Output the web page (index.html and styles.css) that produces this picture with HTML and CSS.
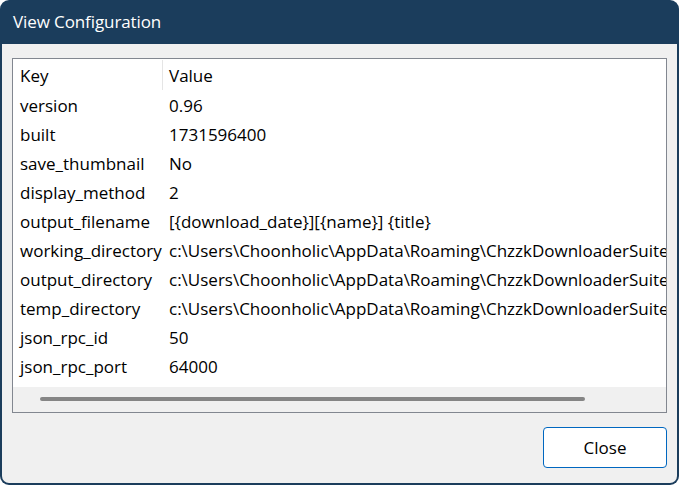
FILE: index.html
```html
<!DOCTYPE html>
<html>
<head>
<meta charset="utf-8">
<link rel="stylesheet" href="styles.css">
</head>
<body>
<div class="window">
  <div class="titlebar">View Configuration</div>
  <div class="client">
    <div class="listbox">
      <div class="list">
        <div class="row header"><div class="key">Key</div><div class="sep"></div><div class="val">Value</div></div>
        <div class="row"><div class="key">version</div><div class="val">0.96</div></div>
        <div class="row"><div class="key">built</div><div class="val">1731596400</div></div>
        <div class="row"><div class="key">save_thumbnail</div><div class="val">No</div></div>
        <div class="row"><div class="key">display_method</div><div class="val">2</div></div>
        <div class="row"><div class="key">output_filename</div><div class="val">[{download_date}][{name}] {title}</div></div>
        <div class="row"><div class="key">working_directory</div><div class="val">c:\Users\Choonholic\AppData\Roaming\ChzzkDownloaderSuite\</div></div>
        <div class="row"><div class="key">output_directory</div><div class="val">c:\Users\Choonholic\AppData\Roaming\ChzzkDownloaderSuite\</div></div>
        <div class="row"><div class="key">temp_directory</div><div class="val">c:\Users\Choonholic\AppData\Roaming\ChzzkDownloaderSuite\</div></div>
        <div class="row"><div class="key">json_rpc_id</div><div class="val">50</div></div>
        <div class="row"><div class="key">json_rpc_port</div><div class="val">64000</div></div>
      </div>
      <div class="hscroll"><div class="thumb"></div></div>
    </div>
    <div class="buttons"><button class="btn">Close</button></div>
  </div>
</div>
</body>
</html>
```

FILE: styles.css
```css
* { box-sizing: border-box; }
html, body { margin: 0; padding: 0; background: #ffffff; }
body { font-family: "Open Sans", "Noto Sans", sans-serif; }
.window {
  width: 679px;
  height: 485px;
  background: #1b3d5c;
  border-radius: 9px;
  display: flex;
  flex-direction: column;
  overflow: hidden;
}
.titlebar {
  height: 44px;
  flex: none;
  color: #ffffff;
  font-size: 17px;
  padding-left: 13px;
  padding-bottom: 1px;
  display: flex;
  align-items: center;
  letter-spacing: -0.1px;
}
.client {
  flex: 1;
  margin: 0 2px 2px 2px;
  background: #f0f0f0;
  border-radius: 0 0 7px 7px;
  padding: 14px 10px 0 10px;
  display: flex;
  flex-direction: column;
}
.listbox {
  height: 355px;
  border: 1px solid #828790;
  background: #ffffff;
  display: flex;
  flex-direction: column;
  overflow: hidden;
}
.list {
  flex: 1;
  overflow: hidden;
  font-size: 17px;
  color: #000000;
}
.row {
  display: flex;
  align-items: center;
  height: 29px;
  white-space: nowrap;
}
.row.header {
  height: 32px;
  position: relative;
}
.key {
  width: 149px;
  flex: none;
  padding-left: 7px;
}
.val {
  padding-left: 7px;
}
.sep {
  position: absolute;
  left: 149px;
  top: 1px;
  width: 1px;
  height: 30px;
  background: #e5e5e5;
}
.hscroll {
  height: 25px;
  flex: none;
  background: #f0f0f0;
  padding: 10px 0 0 27px;
}
.thumb {
  width: 545px;
  height: 4px;
  border-radius: 2px;
  background: #858585;
}
.buttons {
  display: flex;
  justify-content: flex-end;
  padding-top: 14px;
}
.btn {
  width: 124px;
  height: 41px;
  border: 1px solid #0067c0;
  border-radius: 4px;
  background: #ffffff;
  font-family: "Open Sans", "Noto Sans", sans-serif;
  font-size: 17px;
  color: #000000;
  padding: 0;
}
```
